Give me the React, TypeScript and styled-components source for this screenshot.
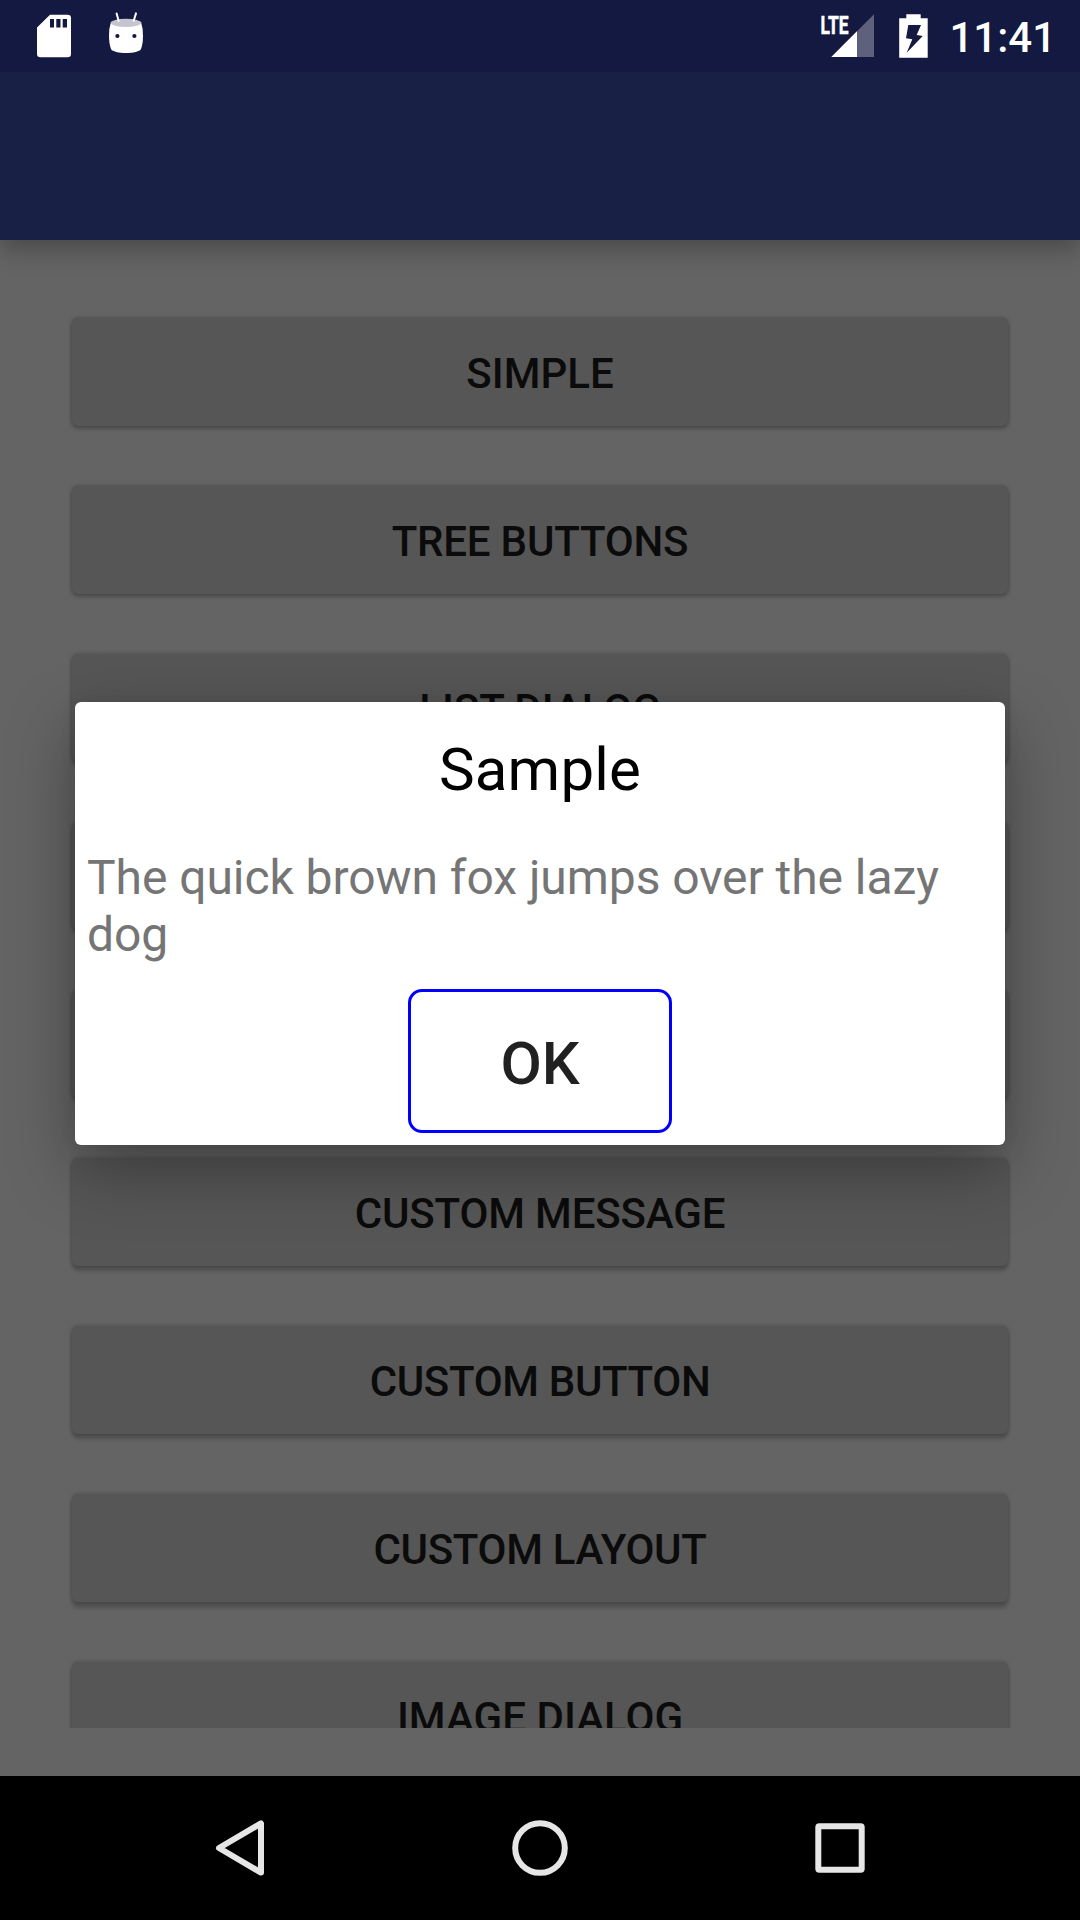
import React from "react";
import styled, { createGlobalStyle } from "styled-components";

const GlobalStyle = createGlobalStyle`
  html, body { margin: 0; padding: 0; }
  body { width: 1080px; height: 1920px; overflow: hidden; background: #000; }
  * { box-sizing: border-box; }
`;

const Screen = styled.div`
  position: relative;
  display: flex;
  flex-direction: column;
  width: 1080px;
  height: 1920px;
  overflow: hidden;
  background: #646464;
  font-family: Roboto, "Liberation Sans", sans-serif;
`;

const StatusBar = styled.header`
  display: flex;
  flex: none;
  align-items: flex-start;
  justify-content: space-between;
  height: 72px;
  padding: 0 24px 0 36px;
  background: #131940;
  z-index: 1;
`;

const StatusGroup = styled.div<{ $gap: number }>`
  display: flex;
  align-items: flex-start;
  gap: ${(p) => p.$gap}px;
`;

const StatusIcon = styled.svg`
  display: block;
  flex: none;
  height: 72px;
`;

const NetworkLabel = styled.text`
  font: 700 26.5px Roboto, "Liberation Sans", sans-serif;
`;

const Clock = styled.time`
  margin-left: 20px;
  padding-top: 13px;
  color: #fff;
  font-size: 42px;
  font-weight: 500;
  line-height: 50px;
`;

const AppBar = styled.div`
  flex: none;
  height: 168px;
  background: #192046;
  box-shadow: 0 10px 22px rgba(0, 0, 0, 0.26);
`;

const Content = styled.main`
  display: flex;
  flex: 1;
  flex-direction: column;
  min-height: 0;
  padding-bottom: 48px;
`;

const ButtonList = styled.div`
  display: flex;
  flex: 1;
  flex-direction: column;
  gap: 60px;
  min-height: 0;
  padding: 78px 72px 0;
  overflow: hidden;
`;

const ListButton = styled.button<{ $tracking: number; $drop: number }>`
  flex: none;
  height: 108px;
  padding: 4px 0 0;
  border: 0;
  border-radius: 6px;
  background: #565656;
  box-shadow: 0 ${(p) => p.$drop}px 4px rgba(0, 0, 0, 0.2), 0 0 4px rgba(0, 0, 0, 0.24);
  color: #0b0b0b;
  font: 500 42px/50px Roboto, "Liberation Sans", sans-serif;
  letter-spacing: ${(p) => p.$tracking}px;
`;

const NavBar = styled.nav`
  display: flex;
  flex: none;
  align-items: center;
  justify-content: center;
  gap: 156px;
  height: 144px;
  background: #000;
`;

const NavIcon = styled.svg`
  display: block;
  width: 144px;
  height: 144px;
  fill: none;
  stroke: #e6e6e6;
  stroke-width: 6;
  stroke-linejoin: round;
`;

const DialogLayer = styled.div`
  position: absolute;
  inset: 72px 0 144px;
  display: flex;
  align-items: center;
  justify-content: center;
  padding-bottom: 1px;
`;

const Dialog = styled.section`
  display: flex;
  flex-direction: column;
  align-items: center;
  width: 930px;
  height: 443px;
  padding: 32px 12px 12px;
  border-radius: 6px;
  background: #fff;
  box-shadow: 0 24px 66px rgba(0, 0, 0, 0.34), 0 0 18px rgba(0, 0, 0, 0.06);
`;

const Title = styled.h1`
  margin: 0;
  color: #000;
  font-size: 60px;
  font-weight: 400;
  line-height: 71px;
  letter-spacing: 0.2px;
`;

const Message = styled.p`
  align-self: stretch;
  margin: 44px 0 0;
  color: #757575;
  font-size: 48px;
  line-height: 57px;
  letter-spacing: -0.06px;
`;

const OkButton = styled.button`
  width: 264px;
  height: 144px;
  margin-top: auto;
  padding: 5px 0 0;
  border: 3px solid #00f;
  border-radius: 14px;
  background: #fff;
  color: #212121;
  font: 500 60px/70px Roboto, "Liberation Sans", sans-serif;
`;

const items = [
  { label: "SIMPLE", tracking: 0 },
  { label: "TREE BUTTONS", tracking: -0.2 },
  { label: "LIST DIALOG", tracking: 0 },
  { label: "", tracking: 0 },
  { label: "", tracking: 0 },
  { label: "CUSTOM MESSAGE", tracking: -0.15 },
  { label: "CUSTOM BUTTON", tracking: -0.34 },
  { label: "CUSTOM LAYOUT", tracking: -0.3 },
  { label: "IMAGE DIALOG", tracking: 0.04 },
];

const SdCardIcon = () => (
  <StatusIcon width="36" viewBox="36 0 36 72">
    <path
      fill="#fff"
      fillRule="evenodd"
      d="M50 14.7H67.5Q71 14.7 71 18V54Q71 57.3 67.5 57.3H40.5Q37 57.3 37 54V27.5ZM50 19V27.5H54V19ZM56.3 19V27.5H60.5V19ZM62.7 19V27.5H67V19Z"
    />
  </StatusIcon>
);

const DroidIcon = () => (
  <StatusIcon width="36" viewBox="108 0 36 72">
    <path
      fill="#fff"
      d="M111 22Q108.9 28 109 36Q109.1 44 111 49C112 51.5 119 53 126 53S140 51.5 141 49Q143 44 143 36Q143 28 141 22Z"
    />
    <ellipse cx="126" cy="22.8" rx="15.3" ry="4.1" fill="#c4c5cf" />
    <path d="M116.6 13.4 118.6 20.8M136 13.4 133.7 20.8" stroke="#fff" strokeWidth="2" strokeLinecap="round" />
    <circle cx="117.4" cy="36" r="2.1" fill="#131940" />
    <circle cx="134.4" cy="36" r="2.1" fill="#131940" />
  </StatusIcon>
);

const SignalIcon = () => (
  <StatusIcon width="56" viewBox="820 0 56 72">
    <path d="M874 14.3V57H831.3Z" fill="#5f617c" />
    <path d="M857 31.3V57H831.3Z" fill="#fff" />
    <NetworkLabel x="820.6" y="33.7" fill="#fff" stroke="#fff" strokeWidth="0.6" textLength="28" lengthAdjust="spacingAndGlyphs">
      LTE
    </NetworkLabel>
  </StatusIcon>
);

const BatteryIcon = () => (
  <StatusIcon width="30" viewBox="899 0 30 72">
    <path
      fill="#fff"
      fillRule="evenodd"
      d="M906.3 14.3H920.7V18.3H927.7V57.7H899.2V18.3H906.3ZM908.3 25 906 38.3 912.3 39.3 906.7 52.7 922.7 36 916.7 35 921 25Z"
    />
  </StatusIcon>
);

export default function App() {
  return (
    <>
      <GlobalStyle />
      <Screen>
        <StatusBar>
          <StatusGroup $gap={36}>
            <SdCardIcon />
            <DroidIcon />
          </StatusGroup>
          <StatusGroup $gap={0}>
            <StatusGroup $gap={23}>
              <SignalIcon />
              <BatteryIcon />
            </StatusGroup>
            <Clock>11:41</Clock>
          </StatusGroup>
        </StatusBar>
        <AppBar />
        <Content>
          <ButtonList>
            {items.map((item, i) => (
              <ListButton key={i} $tracking={item.tracking} $drop={2.5 + i * 0.4}>
                {item.label}
              </ListButton>
            ))}
          </ButtonList>
        </Content>
        <NavBar>
          <NavIcon viewBox="168 1776 144 144">
            <path d="M219 1848 261 1823.4V1872.6Z" />
          </NavIcon>
          <NavIcon viewBox="468 1776 144 144">
            <circle cx="540" cy="1848" r="24.8" />
          </NavIcon>
          <NavIcon viewBox="768 1776 144 144">
            <rect x="818.3" y="1826.3" width="43.4" height="43.4" rx="1" />
          </NavIcon>
        </NavBar>
        <DialogLayer>
          <Dialog>
            <Title>Sample</Title>
            <Message>The quick brown fox jumps over the lazy dog</Message>
            <OkButton>OK</OkButton>
          </Dialog>
        </DialogLayer>
      </Screen>
    </>
  );
}
